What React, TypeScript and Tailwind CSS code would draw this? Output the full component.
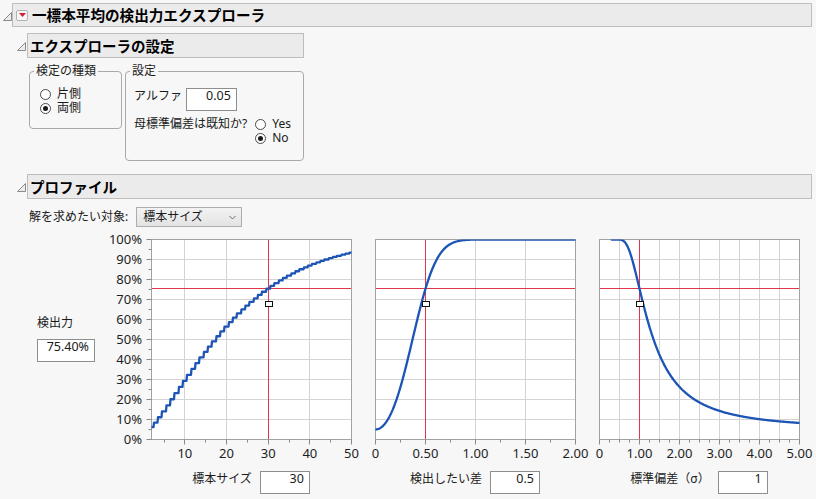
import React, { useMemo } from "react";

function normCdf(x: number): number {
  const a1 = 0.254829592, a2 = -0.284496736, a3 = 1.421413741, a4 = -1.453152027, a5 = 1.061405429, p = 0.3275911;
  const s = x < 0 ? -1 : 1;
  const z = Math.abs(x) / Math.SQRT2;
  const t = 1 / (1 + p * z);
  const y = 1 - ((((a5 * t + a4) * t + a3) * t + a2) * t + a1) * t * Math.exp(-z * z);
  return 0.5 * (1 + s * y);
}

function lgamma(x: number): number {
  const g = 7;
  const c = [0.99999999999980993, 676.5203681218851, -1259.1392167224028, 771.32342877765313, -176.61502916214059, 12.507343278686905, -0.13857109526572012, 9.9843695780195716e-6, 1.5056327351493116e-7];
  if (x < 0.5) return Math.log(Math.PI / Math.sin(Math.PI * x)) - lgamma(1 - x);
  x -= 1;
  let a = c[0];
  const t = x + g + 0.5;
  for (let i = 1; i < 9; i++) a += c[i] / (x + i);
  return 0.5 * Math.log(2 * Math.PI) + (x + 0.5) * Math.log(t) - t + Math.log(a);
}

function tailProb(lambda: number, nu: number, tc: number): number {
  const N = 600;
  const umax = Math.sqrt(nu) + 10;
  const h = umax / N;
  const lc = -(nu / 2 - 1) * Math.log(2) - lgamma(nu / 2);
  const sn = Math.sqrt(nu);
  let s = 0;
  for (let i = 0; i < N; i++) {
    const u = (i + 0.5) * h;
    const f = Math.exp((nu - 1) * Math.log(u) - (u * u) / 2 + lc);
    const k = (tc * u) / sn;
    s += f * (normCdf(lambda - k) + normCdf(-k - lambda));
  }
  return Math.min(1, s * h);
}

function tCrit(nu: number): number {
  let lo = 0, hi = 200;
  for (let i = 0; i < 50; i++) {
    const mid = (lo + hi) / 2;
    if (tailProb(0, nu, mid) > 0.05) lo = mid;
    else hi = mid;
  }
  return (lo + hi) / 2;
}

const Disc = () => (
  <svg width="9" height="9" viewBox="0 0 9 9" className="block">
    <path d="M0.5 8.5 L8.5 8.5 L8.5 0.5 Z" fill="#ececec" stroke="#8a8a8a" strokeWidth="1" strokeLinejoin="round" />
  </svg>
);

const Radio = ({ checked }: { checked?: boolean }) => (
  <span className="w-[11px] h-[11px] rounded-full border border-[#4a4a4a] bg-white flex items-center justify-center shrink-0">
    {checked && <span className="w-[5px] h-[5px] rounded-full bg-[#1a1a1a]" />}
  </span>
);

type Label = { v: number; t: string };

type PlotProps = {
  left: number;
  width: number;
  xmin: number;
  xmax: number;
  vgrid: number[];
  major: number[];
  minor: number[];
  labels: Label[];
  yAxis?: boolean;
  pts: [number, number][];
  redX: number;
  id: string;
};

function Plot({ left, width, xmin, xmax, vgrid, major, minor, labels, yAxis, pts, redX, id }: PlotProps) {
  const W = 200, H = 200, top = 9.5;
  const x0 = left + 0.5;
  const sx = (v: number) => x0 + ((v - xmin) / (xmax - xmin)) * W;
  const crisp = (p: number) => Math.round(p - 0.5) + 0.5;
  const sy = (p: number) => top + (1 - p) * H;
  const d = pts.map((p, i) => `${i ? "L" : "M"}${sx(p[0]).toFixed(2)} ${sy(p[1]).toFixed(2)}`).join(" ");
  const rx = crisp(sx(redX));
  const ry = crisp(sy(0.754));
  const hgrid = [1, 2, 3, 4, 5, 6, 7, 8, 9].map((k) => top + k * 20);
  const bottom = top + H;
  return (
    <svg width={width} height={232} className="block overflow-visible font-['Noto_Sans',sans-serif] text-[13px]">
      <defs>
        <clipPath id={id}>
          <rect x={x0} y={top} width={W} height={H} />
        </clipPath>
      </defs>
      <rect x={x0} y={top} width={W} height={H} fill="#ffffff" />
      {hgrid.map((y) => (
        <line key={"h" + y} x1={x0} x2={x0 + W} y1={y} y2={y} stroke="#d3d3d3" strokeWidth={1} />
      ))}
      {vgrid.map((v) => (
        <line key={"v" + v} x1={crisp(sx(v))} x2={crisp(sx(v))} y1={top} y2={bottom} stroke="#d3d3d3" strokeWidth={1} />
      ))}
      <line x1={x0} x2={x0 + W} y1={ry} y2={ry} stroke="#e2354b" strokeWidth={1} />
      <line x1={rx} x2={rx} y1={top} y2={bottom} stroke="#e2354b" strokeWidth={1} />
      <rect x={x0} y={top} width={W} height={H} fill="none" stroke="#a2a2a2" strokeWidth={1} />
      {major.map((v) => (
        <line key={"M" + v} x1={crisp(sx(v))} x2={crisp(sx(v))} y1={bottom} y2={bottom + 5} stroke="#8a8a8a" strokeWidth={1} />
      ))}
      {minor.map((v) => (
        <line key={"m" + v} x1={crisp(sx(v))} x2={crisp(sx(v))} y1={bottom} y2={bottom + 3} stroke="#8a8a8a" strokeWidth={1} />
      ))}
      {yAxis &&
        Array.from({ length: 21 }, (_, k) => (
          <line key={"y" + k} x1={x0 - (k % 2 === 0 ? 5 : 3)} x2={x0} y1={top + k * 10} y2={top + k * 10} stroke="#8a8a8a" strokeWidth={1} />
        ))}
      {yAxis &&
        Array.from({ length: 11 }, (_, k) => (
          <text key={"yl" + k} x={left - 9} y={top + k * 20 + 4.5} textAnchor="end" fill="#1e1e1e">
            {`${100 - k * 10}%`}
          </text>
        ))}
      {labels.map((l) => (
        <text key={"xl" + l.t} x={sx(l.v)} y={bottom + 18} textAnchor="middle" fill="#1e1e1e">
          {l.t}
        </text>
      ))}
      <g clipPath={`url(#${id})`}>
        <path d={d} fill="none" stroke="#1c55b5" strokeWidth={2.3} strokeLinejoin="round" strokeLinecap="round" />
      </g>
      <rect x={rx - 3} y={71.5} width={7} height={5} fill="#ffffff" stroke="#111111" strokeWidth={1} />
    </svg>
  );
}

const InputBox = ({ w, v }: { w: string; v: string }) => (
  <div className={`${w} h-[23px] border border-[#8e8e8e] bg-white text-right pr-[5px] text-[12.5px] leading-[14px] font-['Noto_Sans',sans-serif] text-[#1a1a1a]`}>
    {v}
  </div>
);

export default function App() {
  const data = useMemo(() => {
    const pw: number[] = [];
    for (let n = 2; n <= 50; n++) {
      const nu = n - 1;
      pw[n] = tailProb(0.5 * Math.sqrt(n), nu, tCrit(nu));
    }
    const p1: [number, number][] = [];
    for (let px = 0; px <= 400; px++) {
      const x = 2 + (px / 400) * 48;
      const n = Math.min(50, Math.max(2, Math.round(x)));
      p1.push([x, pw[n]]);
    }
    const tc29 = tCrit(29);
    const s30 = Math.sqrt(30);
    const p2: [number, number][] = [];
    for (let i = 0; i <= 200; i++) {
      const dd = (i / 200) * 2;
      p2.push([dd, tailProb(dd * s30, 29, tc29)]);
    }
    const p3: [number, number][] = [];
    for (let i = 0; i <= 240; i++) {
      const sg = 0.3 + (i / 240) * 4.7;
      p3.push([sg, tailProb((0.5 * s30) / sg, 29, tc29)]);
    }
    return { p1, p2, p3 };
  }, []);

  return (
    <div className="w-[816px] h-[499px] overflow-hidden bg-[#f7f7f7] pt-[3px] pl-[3px] pr-[4px] text-[#1a1a1a] font-['Noto_Sans','Noto_Sans_CJK_JP',sans-serif] text-[12px]">
      {/* Header 1 */}
      <div className="flex items-center">
        <div className="w-[9px] pt-[2px]">
          <Disc />
        </div>
        <div className="flex-1 h-[24px] border border-[#bdbdbd] bg-[#ebebeb] flex items-center pl-[3px]">
          <span className="w-[12px] h-[11px] rounded-[2px] border border-[#b3b3b3] bg-[#f6f6f6] flex items-center justify-center">
            <svg width="7" height="4" viewBox="0 0 7 4" className="block">
              <path d="M0 0H7L3.5 4Z" fill="#d3202f" />
            </svg>
          </span>
          <span className="ml-[4px] font-bold text-[14.6px] leading-[18px] text-black font-['Noto_Sans_CJK_JP',sans-serif]">
            一標本平均の検出力エクスプローラ
          </span>
        </div>
      </div>

      <div className="pl-[14px]">
        {/* Header 2 */}
        <div className="flex items-center mt-[6px]">
          <div className="w-[10px] pt-[1px]">
            <Disc />
          </div>
          <div className="w-[277px] h-[25px] border border-[#bdbdbd] bg-[#ebebeb] flex items-center pl-[2px]">
            <span className="font-bold text-[14.5px] leading-[18px] text-black font-['Noto_Sans_CJK_JP',sans-serif]">
              エクスプローラの設定
            </span>
          </div>
        </div>

        {/* Settings */}
        <div className="flex items-start gap-[3px] mt-[6px] pl-[12px]">
          <fieldset className="w-[93px] h-[65px] border border-[#a9a9a9] rounded-[4px] p-0 m-0">
            <legend className="ml-[4px] px-[2px] leading-[14px]">検定の種類</legend>
            <div className="pt-[9px] pl-[10px]">
              <div className="flex items-center gap-[6px] h-[14px]">
                <Radio />
                <span className="leading-[14px]">片側</span>
              </div>
              <div className="flex items-center gap-[6px] h-[14px]">
                <Radio checked />
                <span className="leading-[14px]">両側</span>
              </div>
            </div>
          </fieldset>
          <fieldset className="w-[179px] h-[97px] border border-[#a9a9a9] rounded-[4px] p-0 m-0">
            <legend className="ml-[4px] px-[2px] leading-[14px]">設定</legend>
            <div className="pt-[10px] pl-[8px]">
              <div className="flex items-start gap-[4px]">
                <span className="leading-[15px]">アルファ</span>
                <InputBox w="w-[51px]" v="0.05" />
              </div>
              <div className="flex items-start mt-[6px]">
                <span className="leading-[14px]">母標準偏差は既知か?</span>
                <div className="ml-[8px]">
                  <div className="flex items-center gap-[6px] h-[14px]">
                    <Radio />
                    <span className="leading-[14px]">Yes</span>
                  </div>
                  <div className="flex items-center gap-[6px] h-[14px]">
                    <Radio checked />
                    <span className="leading-[14px]">No</span>
                  </div>
                </div>
              </div>
            </div>
          </fieldset>
        </div>

        {/* Header 3 */}
        <div className="flex items-center mt-[13px]">
          <div className="w-[10px] pt-[1px]">
            <Disc />
          </div>
          <div className="flex-1 h-[25px] border border-[#bdbdbd] bg-[#ebebeb] flex items-center pl-[2px]">
            <span className="font-bold text-[14.5px] leading-[18px] text-black font-['Noto_Sans_CJK_JP',sans-serif]">
              プロファイル
            </span>
          </div>
        </div>

        <div className="pl-[12px]">
          {/* Target dropdown */}
          <div className="flex items-center mt-[8px] h-[20px]">
            <span className="leading-[14px]">解を求めたい対象:</span>
            <div className="ml-[8px] w-[106px] h-[20px] border border-[#adadad] bg-gradient-to-b from-[#f3f3f3] to-[#e3e3e3] flex items-center justify-between pl-[6px] pr-[5px]">
              <span className="leading-[14px]">標本サイズ</span>
              <svg width="7" height="5" viewBox="0 0 7 5" className="block">
                <path d="M0.5 1 L3.5 4 L6.5 1" fill="none" stroke="#6a6a6a" strokeWidth="1" />
              </svg>
            </div>
          </div>

          {/* Profiler */}
          <div className="flex items-start mt-[3px]">
            <div className="w-[72px] pl-[8px] pt-[86px]">
              <div className="leading-[14px]">検出力</div>
              <div className="mt-[9px]">
                <InputBox w="w-[58px]" v="75.40%" />
              </div>
            </div>

            <div className="flex flex-col">
              <Plot
                id="c1"
                left={50}
                width={262}
                xmin={2}
                xmax={50}
                vgrid={[10, 20, 30, 40]}
                major={[10, 20, 30, 40, 50]}
                minor={[5, 15, 25, 35, 45]}
                labels={[10, 20, 30, 40, 50].map((v) => ({ v, t: String(v) }))}
                yAxis
                pts={data.p1}
                redX={30}
              />
              <div className="ml-[38px] w-[224px] flex justify-center items-start gap-[8px] mt-[9px]">
                <span className="leading-[14px] pt-[1px]">標本サイズ</span>
                <InputBox w="w-[50px]" v="30" />
              </div>
            </div>

            <div className="flex flex-col">
              <Plot
                id="c2"
                left={12}
                width={224}
                xmin={0}
                xmax={2}
                vgrid={[0.5, 1, 1.5]}
                major={[0, 0.5, 1, 1.5, 2]}
                minor={[0.25, 0.75, 1.25, 1.75]}
                labels={[
                  { v: 0, t: "0" },
                  { v: 0.5, t: "0.50" },
                  { v: 1, t: "1.00" },
                  { v: 1.5, t: "1.50" },
                  { v: 2, t: "2.00" },
                ]}
                pts={data.p2}
                redX={0.5}
              />
              <div className="w-[224px] flex justify-center items-start gap-[8px] mt-[9px]">
                <span className="leading-[14px] pt-[1px]">検出したい差</span>
                <InputBox w="w-[50px]" v="0.5" />
              </div>
            </div>

            <div className="flex flex-col">
              <Plot
                id="c3"
                left={12}
                width={224}
                xmin={0}
                xmax={5}
                vgrid={[0.5, 1, 1.5, 2, 2.5, 3, 3.5, 4, 4.5]}
                major={[0, 1, 2, 3, 4, 5]}
                minor={[0.25, 0.5, 0.75, 1.25, 1.5, 1.75, 2.25, 2.5, 2.75, 3.25, 3.5, 3.75, 4.25, 4.5, 4.75]}
                labels={[
                  { v: 0, t: "0" },
                  { v: 1, t: "1.00" },
                  { v: 2, t: "2.00" },
                  { v: 3, t: "3.00" },
                  { v: 4, t: "4.00" },
                  { v: 5, t: "5.00" },
                ]}
                pts={data.p3}
                redX={1}
              />
              <div className="w-[224px] flex justify-center items-start gap-[8px] mt-[9px]">
                <span className="leading-[14px] pt-[1px]">標準偏差（σ）</span>
                <InputBox w="w-[50px]" v="1" />
              </div>
            </div>
          </div>
        </div>
      </div>
    </div>
  );
}
